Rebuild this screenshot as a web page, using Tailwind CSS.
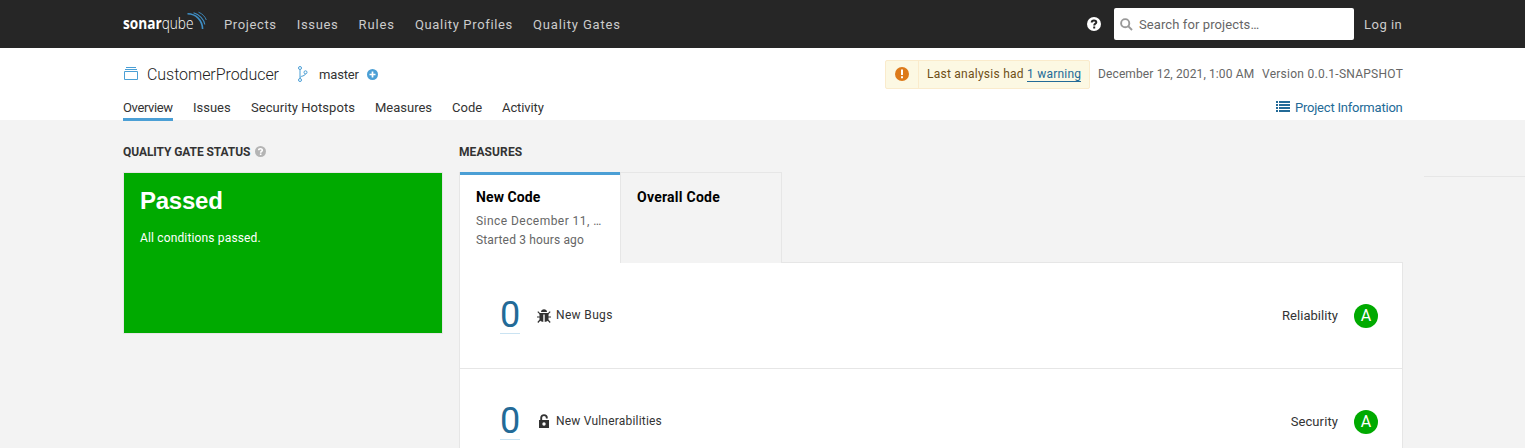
<!DOCTYPE html>
<html lang="en">
<head>
<meta charset="utf-8">
<title>CustomerProducer</title>
<script src="https://cdn.jsdelivr.net/npm/@tailwindcss/browser@4"></script>
</head>
<body class="w-[1525px] h-[448px] overflow-hidden bg-[#f3f3f3] font-[Roboto,sans-serif] text-[13px] text-[#333] whitespace-nowrap">
<header class="h-12 bg-[#262626] pl-[123px] pr-[122px] flex items-center text-[#ccc]">
  <svg class="w-[84px] h-12 mr-[17px] shrink-0" viewBox="0 0 84 48">
    <text x="0" y="28.5" font-family="Open Sans" font-weight="700" font-size="16" fill="#fff" textLength="70.5" lengthAdjust="spacingAndGlyphs">sonar<tspan font-weight="300">qube</tspan></text>
    <g fill="none" stroke="#3f8ec4"><path d="M64.500 13.800C73 14 79.300 20 79.600 29" stroke-width="1.600"/><path d="M70.500 12.800C76.500 14.500 81 19.500 81.800 24.500" stroke-width="1.100"/><path d="M75.500 12.200C79.500 13.800 82 16.500 83.300 20" stroke-width=".9"/></g>
  </svg>
  <nav class="flex gap-5 grow pt-px">
    <a class="tracking-[.63px]">Projects</a><a class="tracking-[.67px]">Issues</a><a class="tracking-[.9px]">Rules</a><a class="tracking-[.66px]">Quality Profiles</a><a class="tracking-[.85px]">Quality Gates</a>
  </nav>
  <svg class="size-[14px] mr-[13px]" viewBox="0 0 14 14"><circle cx="7" cy="7" r="7" fill="#fff"/><path d="M4.700 5.500C4.700 2.700 9.300 2.800 9.300 5.300C9.300 6.800 7.200 6.600 7.200 8.500" fill="none" stroke="#262626" stroke-width="2"/><rect x="6.200" y="9.500" width="2" height="2" fill="#262626"/></svg>
  <div class="w-60 h-8 bg-white rounded-xs flex items-center pl-1.5 text-[#666]">
    <svg class="size-[13px] mr-1.5" viewBox="0 0 13 13" fill="none" stroke="#999" stroke-width="1.900"><circle cx="5.200" cy="5.200" r="4.100"/><path d="M8.200 8.200L12 12"/></svg>
    <span class="tracking-[.1px] pt-px">Search for projects…</span>
  </div>
  <a class="ml-2.5 w-[39px] pt-px tracking-[.5px]">Log in</a>
</header>
<section class="h-[72px] bg-white pl-[123px] pr-[122px]">
  <div class="h-[52px] flex items-center">
    <svg class="w-4 h-4 mr-2 shrink-0" viewBox="0 0 16 16" fill="none" stroke="#4b9fd5"><path d="M1.500 5.500h13v8h-13zM2 3.500h12M3 1.500h10"/></svg>
    <span class="text-base font-light w-[133px] text-[#222] tracking-[-.05px] pt-px">CustomerProducer</span>
    <svg class="w-3 h-4 ml-[17px] mr-2.5" viewBox="0 0 12 16" fill="none" stroke="#4b9fd5"><circle cx="3" cy="2" r="1.500"/><circle cx="3" cy="14" r="1.500"/><circle cx="8.500" cy="6.300" r="1.500"/><path d="M3 3.500v9M3.200 11.500C4 9.500 8 10.500 8.500 7.800"/></svg>
    <span class="w-10 tracking-[-.15px] pt-px">master</span>
    <svg class="size-[11px] ml-2" viewBox="0 0 11 11"><circle cx="5.500" cy="5.500" r="5.500" fill="#4b9fd5"/><path d="M5.500 2.500v6M2.500 5.500h6" stroke="#fff" stroke-width="1.700"/></svg>
    <div class="grow"></div>
    <div class="w-[205px] h-[29px] rounded-xs border border-[#faebcc] bg-[#fcf8e3] flex items-center text-xs text-[#6f4f17]">
      <div class="w-[33px] h-full border-r border-[#faebcc] flex items-center justify-center"><svg class="size-[14px]" viewBox="0 0 14 14"><circle cx="7" cy="7" r="7" fill="#dd7a1a"/><path d="M7 2.500v5.500M7 9.300v2" stroke="#fff" stroke-width="2"/></svg></div>
      <span class="ml-2 w-[97px] tracking-[.25px]">Last analysis had</span>
      <a class="ml-[3px] w-[54px] h-4 leading-4 border-b border-[#236a97] text-[#236a97] tracking-[.22px]">1 warning</a>
    </div>
    <span class="ml-2 w-[156px] text-xs text-[#666] tracking-[.12px]">December 12, 2021, 1:00 AM</span>
    <span class="ml-2 w-[141px] text-xs text-[#666] tracking-[.26px]">Version 0.0.1-SNAPSHOT</span>
  </div>
  <div class="flex gap-5 h-[21px] leading-[15px]">
    <a class="border-b-[3px] border-[#4b9fd5] w-[50px] tracking-[-.37px]">Overview</a><a class="w-[38px]">Issues</a><a class="w-[104px] tracking-[.05px]">Security Hotspots</a><a class="w-[57px]">Measures</a><a class="w-[30px]">Code</a><a class="tracking-[-.1px]">Activity</a>
    <div class="grow"></div>
    <a class="flex text-[#236a97]"><svg class="w-[14px] h-[11px] mr-[5px] mt-px" viewBox="0 0 14 11" fill="#236a97"><path d="M0 0h2v2H0zM3 0h11v2H3zM0 3h2v2H0zM3 3h11v2H3zM0 6h2v2H0zM3 6h11v2H3zM0 9h2v2H0zM3 9h11v2H3z"/></svg><span class="w-[108px] tracking-[-.22px]">Project Information</span></a>
  </div>
</section>
<main class="flex h-[328px] overflow-hidden pl-[123px]">
  <section class="w-80 pt-6">
    <h2 class="h-7 flex items-start text-xs font-bold"><span class="w-[132px] tracking-[-.08px]">QUALITY GATE STATUS</span><svg class="size-[11px] mt-0.5" viewBox="0 0 14 14"><circle cx="7" cy="7" r="7" fill="#b4b4b4"/><path d="M4.700 5.500C4.700 2.700 9.300 2.800 9.300 5.300C9.300 6.800 7.200 6.600 7.200 8.500" fill="none" stroke="#fff" stroke-width="2"/><rect x="6.200" y="9.500" width="2" height="2" fill="#fff"/></svg></h2>
    <div class="h-[162px] bg-[#0a0] border border-[#e6e6e6] px-4 pt-3 text-white">
      <p class="text-2xl font-bold font-[Liberation_Sans,sans-serif] tracking-[-.25px]">Passed</p>
      <p class="mt-[13px] text-xs tracking-[.15px]">All conditions passed.</p>
    </div>
  </section>
  <section class="w-[944px] ml-4 pt-6">
    <h2 class="h-7 text-xs font-bold tracking-[.1px]">MEASURES</h2>
    <div class="flex h-[91px]">
      <div class="w-[161px] border-l border-[#e6e6e6] bg-white"><div class="h-full border-t-[3px] border-[#4b9fd5] pl-4 pt-3">
        <p class="text-sm font-bold text-black tracking-[.1px]">New Code</p>
        <p class="mt-[5px] text-xs text-[#666] leading-[19px] tracking-[.45px]">Since December 11, …</p>
        <p class="text-xs text-[#666] leading-[19px] tracking-[.15px]">Started 3 hours ago</p>
      </div></div>
      <div class="w-[162px] border-x border-t border-[#e6e6e6] pl-4 pt-3.5"><p class="text-sm font-bold text-black tracking-[.25px]">Overall Code</p></div>
      <div class="grow border-b border-[#e6e6e6]"></div>
    </div>
    <div class="bg-white border-x border-[#e6e6e6]">
      <div class="h-[106px] border-b border-[#e6e6e6] flex items-center pl-10 pr-6">
        <a class="w-5 h-[38px] mb-0.5 border-b border-[#cae3f2] text-[36px] leading-[38px] text-[#236a97]">0</a>
        <svg class="size-[14px] ml-[17px] mr-[5px]" viewBox="0 0 14 14"><path d="M4 3C4 -.6 10 -.6 10 3z" fill="#333"/><path d="M2.500 4h9v6C11.500 12 9.300 13 7 13S2.500 12 2.500 10z" fill="#333"/><path d="M3.500 5.300L.800 2.600M10.500 5.300L13.200 2.600M3 8H0M11 8h3M3.500 10.500L.800 13.500M10.500 10.500L13.200 13.500" stroke="#333" stroke-width="1.200"/><path d="M7 5.500v8" stroke="#fff" stroke-width="1.400"/></svg>
        <span class="text-xs tracking-[.35px] mb-0.5">New Bugs</span><div class="grow"></div><span class="pt-px tracking-[.05px]">Reliability</span>
        <div class="ml-4 size-6 rounded-full bg-[#0a0] text-white text-base leading-6 text-center">A</div>
      </div>
      <div class="h-[106px] flex items-center pl-10 pr-6">
        <a class="w-5 h-[38px] mb-0.5 border-b border-[#cae3f2] text-[36px] leading-[38px] text-[#236a97]">0</a>
        <svg class="size-[14px] ml-[17px] mr-[5px] mb-0.5" viewBox="0 0 14 14"><path d="M2 6h10v8H2z" fill="#333"/><path d="M4.200 6.500V3.700C4.200 .2 9.800 .2 9.800 3.700V4.500" fill="none" stroke="#333" stroke-width="1.900"/><circle cx="7" cy="10" r="1.700" fill="#fff"/></svg>
        <span class="text-xs tracking-[.2px] mb-0.5">New Vulnerabilities</span><div class="grow"></div><span class="tracking-[.1px]">Security</span>
        <div class="ml-4 size-6 rounded-full bg-[#0a0] text-white text-base leading-6 text-center">A</div>
      </div>
    </div>
  </section>
  <div class="grow ml-[21px] mt-14 h-px bg-[#e6e6e6]"></div>
</main>
</body>
</html>
